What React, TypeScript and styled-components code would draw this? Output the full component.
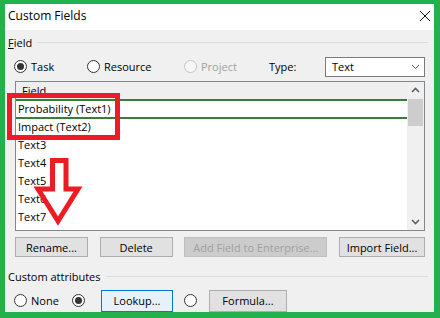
import React from 'react';
import styled, { createGlobalStyle } from 'styled-components';

// Paint-style annotation colours on top of a Windows dialog
const GREEN = '#22b14c';
const RED = '#ed1c24';

const GlobalStyle = createGlobalStyle`
  html, body {
    margin: 0;
    padding: 0;
    background: ${GREEN};
  }
  body {
    font-family: "Open Sans", "Noto Sans", sans-serif;
    font-size: 11px;
    color: #000;
  }
`;

const Frame = styled.div`
  position: relative;
  box-sizing: border-box;
  width: 440px;
  height: 318px;
  border-style: solid;
  border-color: ${GREEN};
  border-width: 4px 6px 6px 5px;
  display: flex;
  flex-direction: column;
  overflow: hidden;
`;

const TitleBar = styled.div`
  flex: none;
  height: 26px;
  background: #fff;
  display: flex;
  align-items: center;
  justify-content: space-between;
  padding: 0 3px 3px 3px;
  box-sizing: border-box;
  font-size: 12px;
`;

const Body = styled.div`
  flex: 1;
  background: #f0f0f0;
  padding: 0 6px 0 3px;
  display: flex;
  flex-direction: column;
  overflow: hidden;
`;

const GroupHeader = styled.div<{ $top: number }>`
  margin-top: ${p => p.$top}px;
  height: 16px;
  display: flex;
  align-items: center;
  white-space: nowrap;
`;

const Rule = styled.div`
  flex: 1;
  height: 1px;
  margin-left: 5px;
  background: #dcdcdc;
`;

const Key = styled.span`
  text-decoration: underline;
`;

const TypeRow = styled.div`
  margin: 6px 0 0 6px;
  height: 20px;
  display: grid;
  grid-template-columns: 73px 97px 85px 56px 100px;
  align-items: center;
`;

const RadioItem = styled.label<{ $disabled?: boolean }>`
  display: flex;
  align-items: center;
  gap: 4px;
  color: ${p => (p.$disabled ? '#a0a0a0' : '#000')};
  white-space: nowrap;
`;

const Circle = styled.span<{ $checked?: boolean; $disabled?: boolean }>`
  box-sizing: border-box;
  width: 13px;
  height: 13px;
  border-radius: 50%;
  border: 1px solid ${p => (p.$disabled ? '#c4c4c4' : '#333')};
  background: ${p => (p.$disabled ? '#f7f7f7' : '#fff')};
  display: flex;
  align-items: center;
  justify-content: center;
  flex: none;
  &::after {
    content: '';
    display: ${p => (p.$checked ? 'block' : 'none')};
    width: 7px;
    height: 7px;
    border-radius: 50%;
    background: #333;
  }
`;

const Select = styled.div`
  box-sizing: border-box;
  height: 20px;
  border: 1px solid #7a7a7a;
  background: #fff;
  display: flex;
  align-items: center;
  justify-content: space-between;
  padding: 0 4px 0 6px;
`;

const ListBox = styled.div`
  margin: 4px 3px 0 7px;
  height: 151px;
  box-sizing: border-box;
  border: 1px solid #828790;
  background: #fff;
  display: flex;
  overflow: hidden;
`;

const Rows = styled.div`
  flex: 1;
  display: flex;
  flex-direction: column;
  overflow: hidden;
`;

const HeaderCell = styled.div`
  flex: none;
  height: 17px;
  background: #efefef;
  padding-left: 6px;
  display: flex;
  align-items: center;
`;

const Row = styled.div<{ $selected?: boolean }>`
  flex: none;
  box-sizing: border-box;
  height: ${p => (p.$selected ? 20 : 18)}px;
  margin-top: ${p => (p.$selected ? 0 : -1)}px;
  margin-bottom: ${p => (p.$selected ? 0 : 1)}px;
  padding-left: 2px;
  display: flex;
  align-items: center;
  white-space: nowrap;
  border-top: ${p => (p.$selected ? `2px solid #3b7a3a` : 'none')};
  border-bottom: ${p => (p.$selected ? `2px solid #3b7a3a` : 'none')};
`;

const ScrollBar = styled.div`
  flex: none;
  width: 17px;
  background: #f0f0f0;
  display: flex;
  flex-direction: column;
`;

const ScrollArrow = styled.div`
  height: 17px;
  display: flex;
  align-items: center;
  justify-content: center;
`;

const Thumb = styled.div`
  height: 27px;
  margin: 0 1px;
  background: #cdcdcd;
`;

const Track = styled.div`
  flex: 1;
`;

const ButtonRow = styled.div`
  margin: 6px 3px 0 7px;
  height: 20px;
  display: flex;
  justify-content: space-between;
`;

const Button = styled.div<{ $w: number; $h?: number; $disabled?: boolean; $focused?: boolean }>`
  box-sizing: border-box;
  width: ${p => p.$w}px;
  height: ${p => p.$h ?? 20}px;
  border: 1px solid ${p => (p.$focused ? '#0078d7' : p.$disabled ? '#bfbfbf' : '#adadad')};
  background: ${p => (p.$focused ? '#e5f1fb' : p.$disabled ? '#cccccc' : '#e1e1e1')};
  color: ${p => (p.$disabled ? '#a0a0a0' : '#000')};
  display: flex;
  align-items: center;
  justify-content: center;
  white-space: nowrap;
`;

const AttrRow = styled.div`
  margin: 6px 0 0 6px;
  height: 22px;
  display: grid;
  grid-template-columns: 58px 29px 83px 25px 78px;
  align-items: center;
`;

const RedBox = styled.div`
  position: absolute;
  left: 2px;
  top: 89px;
  width: 113px;
  height: 47px;
  box-sizing: border-box;
  border: 5px solid ${RED};
`;

const ArrowMark = styled.svg`
  position: absolute;
  left: 25px;
  top: 146px;
`;

const Chevron = ({ dir, bold }: { dir: 'up' | 'down'; bold?: boolean }) => (
  <svg width="9" height="6" viewBox="0 0 9 6">
    <polyline
      points={dir === 'up' ? '1,5 4.5,1.5 8,5' : '1,1 4.5,4.5 8,1'}
      fill="none"
      stroke={bold ? '#606060' : '#555'}
      strokeWidth={bold ? 1.6 : 1}
    />
  </svg>
);

const fields = ['Text3', 'Text4', 'Text5', 'Text6', 'Text7', 'Text8'];

export default function App() {
  return (
    <>
      <GlobalStyle />
      <Frame>
        <TitleBar>
          <span>Custom Fields</span>
          <svg width="12" height="12" viewBox="0 0 12 12">
            <path d="M1 1 L11 11 M11 1 L1 11" stroke="#111" strokeWidth="1" />
          </svg>
        </TitleBar>
        <Body>
          <GroupHeader $top={5}>
            <span><Key>F</Key>ield</span>
            <Rule />
          </GroupHeader>
          <TypeRow>
            <RadioItem><Circle $checked />Task</RadioItem>
            <RadioItem><Circle />Resource</RadioItem>
            <RadioItem $disabled><Circle $disabled />Project</RadioItem>
            <span>Type:</span>
            <Select>
              <span>Text</span>
              <Chevron dir="down" />
            </Select>
          </TypeRow>
          <ListBox>
            <Rows>
              <HeaderCell>Field</HeaderCell>
              <Row $selected>Probability (Text1)</Row>
              <Row>Impact (Text2)</Row>
              {fields.map(f => (
                <Row key={f}>{f}</Row>
              ))}
            </Rows>
            <ScrollBar>
              <ScrollArrow><Chevron dir="up" bold /></ScrollArrow>
              <Thumb />
              <Track />
              <ScrollArrow><Chevron dir="down" bold /></ScrollArrow>
            </ScrollBar>
          </ListBox>
          <ButtonRow>
            <Button $w={73}>Rename...</Button>
            <Button $w={73}>Delete</Button>
            <Button $w={143} $disabled>Add Field to Enterprise...</Button>
            <Button $w={86}>Import Field...</Button>
          </ButtonRow>
          <GroupHeader $top={11}>
            <span>Custom attributes</span>
            <Rule />
          </GroupHeader>
          <AttrRow>
            <RadioItem><Circle />None</RadioItem>
            <RadioItem><Circle $checked /></RadioItem>
            <Button $w={72} $h={22} $focused>Lookup...</Button>
            <RadioItem><Circle /></RadioItem>
            <Button $w={78} $h={22}>Formula...</Button>
          </AttrRow>
        </Body>
        <RedBox />
        <ArrowMark width="54" height="78" viewBox="0 0 54 78">
          <polygon
            points="22.5,10.5 36,10.5 36,39 48,39 28,71 8,39 22.5,39"
            fill="none"
            stroke={RED}
            strokeWidth="5"
            strokeLinejoin="miter"
          />
        </ArrowMark>
      </Frame>
    </>
  );
}
